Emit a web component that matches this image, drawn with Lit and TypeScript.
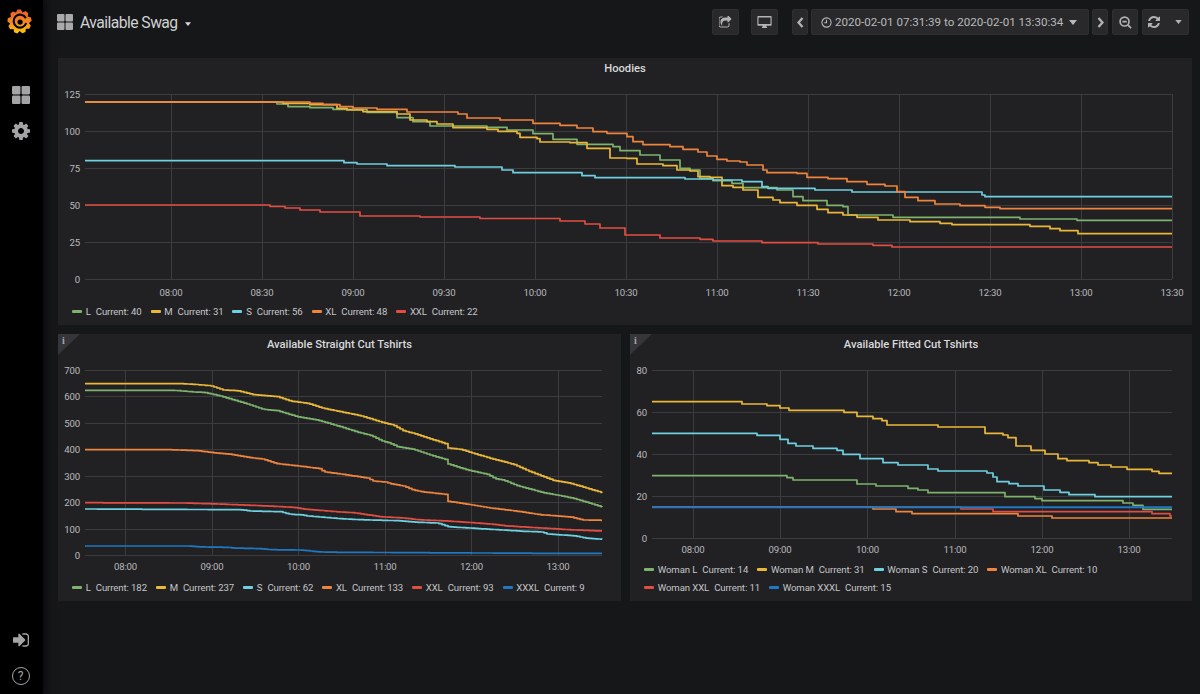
import { LitElement, html, css, svg } from "lit";
import { customElement, property } from "lit/decorators.js";

type Pt = [number, number];
interface Series { color: string; d: string; w?: number }
interface Chart {
  title: string;
  info: boolean;
  box: [number, number, number, number];
  x0: number;
  x1: number;
  labelY: number;
  gridTop: number;
  gridBottom: number;
  xTicks: [number, string][];
  yTicks: [number, string][];
  series: Series[];
  legend: { name: string; value: number; color: string }[];
}

const C = { L: "#7eb26d", M: "#eab839", S: "#6ed0e0", XL: "#ef843c", XXL: "#e24d42", XXXL: "#1f78c1" };

/* step-after line: every point says "at x the value jumps to y" */
function steps(pts: Pt[], end: number): string {
  let d = `M${pts[0][0]} ${pts[0][1]}`;
  for (let i = 1; i < pts.length; i++) d += `H${pts[i][0]}V${pts[i][1]}`;
  return d + `H${end}`;
}
/* many fine steps along straight knots */
function fine(pts: Pt[], period = 3): string {
  const out: Pt[] = [];
  let x = pts[0][0];
  const end = pts[pts.length - 1][0];
  let i = 0;
  while (x < end) {
    while (i < pts.length - 2 && pts[i + 1][0] <= x) i++;
    const [a, b] = pts[i];
    const [c, e] = pts[i + 1];
    out.push([x, +(b + ((e - b) * (x - a)) / (c - a)).toFixed(1)]);
    x += period;
  }
  out.push([end, pts[pts.length - 1][1]]);
  return steps(out, end);
}

const hoodies: Chart = {
  title: "Hoodies",
  info: false,
  box: [58, 80, 1134, 223],
  x0: 85,
  x1: 1172,
  labelY: 296,
  gridTop: 94,
  gridBottom: 279,
  xTicks: [[171, "08:00"], [262, "08:30"], [353, "09:00"], [444, "09:30"], [535, "10:00"], [626, "10:30"], [717, "11:00"], [808, "11:30"], [899, "12:00"], [990, "12:30"], [1081, "13:00"], [1172, "13:30"]],
  yTicks: [[94, "125"], [131, "100"], [168, "75"], [205, "50"], [242, "25"], [279, "0"]],
  series: [
    { color: C.L, d: steps([[85,102],[277,104],[288,106.7],[310,107.7],[333,109.3],[367,112.3],[397,117.7],[413,121.7],[430,126],[487,127.3],[507,130],[533,133.7],[553,139.3],[577,144.3],[613,146.7],[620,150.7],[640,155],[660,160],[680,168.3],[690,170],[700,178.3],[713,180.7],[732,183.3],[743,187.7],[777,190],[793,196.7],[803,200.7],[827,205.3],[843,206.7],[848,215],[893,217.3],[1020,219],[1077,220.3]], 1172) },
    { color: C.M, d: steps([[85,102],[283,103.3],[310,104.7],[337,108.3],[347,110],[363,111.7],[397,114],[410,120],[427,121.7],[437,124],[453,127.7],[487,129.3],[498,131.3],[517,133.3],[520,137.3],[537,138.7],[540,142],[570,142.7],[587,148.3],[610,158],[627,158.3],[637,164],[663,165.7],[677,170],[690,171],[698,176.7],[710,177.3],[722,185.7],[733,187.3],[743,190],[758,197.3],[773,200],[780,202.7],[797,205.3],[817,209.3],[828,212.7],[843,215],[857,217.3],[878,220],[910,221.7],[940,223.3],[952,224.7],[1030,226.3],[1050,228.7],[1060,230.7],[1078,233.7]], 1172) },
    { color: C.S, d: steps([[85,160.7],[344,162.7],[357,164],[387,165.7],[455,167],[502,170],[513,172.7],[582,175.7],[595,177.7],[685,179],[713,180],[742,181.7],[762,186.7],[768,188.3],[815,190],[852,192],[982,195],[985,196.7]], 1172) },
    { color: C.XL, d: steps([[85,102],[310,103.3],[323,104.7],[340,106.7],[353,108],[377,109.3],[407,112],[458,114],[467,118],[500,120],[533,123.3],[560,125.3],[577,128],[593,131.7],[607,133.3],[627,136.7],[633,141.7],[643,144.7],[670,146.7],[683,149.3],[698,152],[707,156],[717,159.3],[727,161],[740,162],[747,165],[763,170],[767,172.7],[797,173.3],[807,177.3],[828,178.7],[847,181.7],[867,184.3],[885,186],[897,191.7],[905,197.3],[918,200.7],[935,204],[960,205.7],[985,207.3],[1000,208.7]], 1172) },
    { color: C.XXL, d: steps([[85,205],[270,206.5],[285,208],[300,210],[320,212],[360,216],[420,217],[480,218.5],[560,221],[585,224],[600,228],[625,235],[660,238],[700,239.3],[713,241],[762,242.7],[818,244],[873,245.3],[892,247]], 1172) },
  ],
  legend: [
    { name: "L", value: 40, color: C.L },
    { name: "M", value: 31, color: C.M },
    { name: "S", value: 56, color: C.S },
    { name: "XL", value: 48, color: C.XL },
    { name: "XXL", value: 22, color: C.XXL },
  ],
};

const straight: Chart = {
  title: "Available Straight Cut Tshirts",
  info: true,
  box: [58, 356, 563, 223],
  x0: 85,
  x1: 602,
  labelY: 570,
  gridTop: 370,
  gridBottom: 555.5,
  xTicks: [[125.5, "08:00"], [212, "09:00"], [298.5, "10:00"], [385, "11:00"], [471.5, "12:00"], [558, "13:00"]],
  yTicks: [[370, "700"], [396.5, "600"], [423, "500"], [449.5, "400"], [476, "300"], [502.5, "200"], [529, "100"], [555.5, "0"]],
  series: [
    { color: C.L, d: fine([[85,390.3],[173,390.3],[193,392],[203,392.3],[220,396],[247,404],[263,409.3],[277,410.7],[297,416.7],[317,420],[340,426.7],[357,432],[370,435.3],[382,441],[390,443.3],[397,446.7],[413,449.3],[430,455],[447,460],[448,464],[467,470],[487,474.3],[495,478.7],[503,480],[517,485.7],[543,492.7],[560,495.7],[573,498.3],[602,507]]) },
    { color: C.M, d: fine([[85,383.7],[180,383.7],[193,384.3],[210,385.7],[223,390],[237,390.7],[253,394.7],[277,396.7],[290,401],[307,403.3],[323,408.3],[340,411.7],[360,415.7],[383,422.7],[393,425],[403,430.7],[413,433.3],[447,444.3],[448,448],[460,449.3],[473,453.3],[490,458.3],[513,464.3],[530,471.7],[553,480.3],[570,483.3],[602,492.7]]) },
    { color: C.S, d: fine([[85,509],[240,509.7],[250,511],[280,511.7],[290,514.3],[303,515],[307,516],[340,518.7],[360,519.7],[397,520.7],[417,522.3],[437,523],[448,526.7],[473,528.3],[497,529.7],[523,531.3],[542,532],[547,534],[573,535.7],[587,538.3],[602,539.3]]) },
    { color: C.XL, d: fine([[85,449.7],[170,449.7],[197,450.7],[213,452.7],[230,454.3],[250,457.7],[262,459],[277,463.7],[298,466],[320,468.7],[323,471.7],[340,474],[367,478],[373,481],[385,482],[390,483.7],[403,486],[413,490],[423,492],[445,494.3],[448,501.3],[470,504.7],[490,508],[513,510.7],[540,514.7],[570,517],[583,520],[602,520.3]]) },
    { color: C.XXL, d: fine([[85,502.7],[183,503],[217,504],[260,505.7],[293,507.3],[303,509],[340,512],[353,512.7],[380,516.7],[403,518],[417,519.7],[447,521],[490,524],[507,526],[553,528.7],[573,530],[602,531]]) },
    { color: C.XXXL, d: fine([[85,546],[187,546],[203,547],[227,547.3],[233,548],[260,548.7],[270,549.7],[300,550],[320,552],[340,552.3],[540,553.3],[602,553.3]]) },
  ],
  legend: [
    { name: "L", value: 182, color: C.L },
    { name: "M", value: 237, color: C.M },
    { name: "S", value: 62, color: C.S },
    { name: "XL", value: 133, color: C.XL },
    { name: "XXL", value: 93, color: C.XXL },
    { name: "XXXL", value: 9, color: C.XXXL },
  ],
};

const fitted: Chart = {
  title: "Available Fitted Cut Tshirts",
  info: true,
  box: [630, 356, 562, 205],
  x0: 652,
  x1: 1172,
  labelY: 553,
  gridTop: 370,
  gridBottom: 538,
  xTicks: [[693, "08:00"], [780, "09:00"], [867.5, "10:00"], [955, "11:00"], [1042, "12:00"], [1129, "13:00"]],
  yTicks: [[370, "80"], [412, "60"], [454, "40"], [496, "20"], [538, "0"]],
  series: [
    { color: C.L, d: steps([[652,475.7],[787,477.7],[793,480],[857,484],[876,486],[908,488.3],[918,490],[928,492.7],[1005,496.7],[1035,498.7],[1042,500.7],[1123,503],[1133,505.3],[1143,509.3]], 1172) },
    { color: C.M, d: steps([[652,401.7],[742,404],[767,405.7],[780,408],[789,410.3],[844,412.3],[857,416.3],[873,418.7],[882,420.7],[887,425],[938,427],[985,433.3],[1003,435],[1008,437.7],[1016,446],[1031,450.3],[1045,454],[1058,458.7],[1067,460.7],[1089,462.7],[1098,465],[1111,467],[1127,469.3],[1152,471.3],[1159,473.3]], 1172) },
    { color: C.S, d: steps([[652,433.3],[757,435.3],[780,439.3],[788,443.3],[796,446],[813,448.3],[837,450.3],[843,454.3],[860,458.7],[883,462.7],[898,465],[928,469],[938,471],[987,473],[993,477],[997,481.7],[1009,483.7],[1018,486],[1044,490],[1060,492.3],[1069,494.7],[1095,496.7]], 1172) },
    { color: C.XL, d: steps([[652,507],[873,509],[896,511.7],[912,513.7],[1018,516],[1052,518]], 1172) },
    { color: C.XXL, d: steps([[652,507],[961,509],[993,511.7],[1152,513.7],[1170,516]], 1172) },
    { color: C.XXXL, d: steps([[652,507.3]], 1172), w: 2 },
  ],
  legend: [
    { name: "Woman L", value: 14, color: C.L },
    { name: "Woman M", value: 31, color: C.M },
    { name: "Woman S", value: 20, color: C.S },
    { name: "Woman XL", value: 10, color: C.XL },
    { name: "Woman XXL", value: 11, color: C.XXL },
    { name: "Woman XXXL", value: 15, color: C.XXXL },
  ],
};

@customElement("chart-panel")
class ChartPanel extends LitElement {
  @property({ attribute: false }) config!: Chart;

  static styles = css`
    :host { display: flex; flex-direction: column; position: relative; height: 267px; background: #212124; min-width: 0; }
    .title { height: 22px; line-height: 22px; text-align: center; font-size: 11.2px; font-weight: 500; color: #d8d9da; }
    svg { display: block; flex: none; }
    .grid { stroke: #3c3c3f; stroke-width: 1; shape-rendering: crispEdges; }
    .tick { font-size: 9.6px; letter-spacing: -0.18px; fill: #b9b9bb; }
    .line { fill: none; stroke-width: 1.7; stroke-linejoin: round; }
    .legend { display: flex; flex-wrap: wrap; column-gap: 9px; row-gap: 2px; padding: 0 13px 6px 14px; }
    .item { display: flex; align-items: center; height: 16px; font-size: 9.6px; letter-spacing: -0.1px; color: #c4c5c7; white-space: nowrap; }
    .swatch { width: 10px; height: 3px; border-radius: 1px; margin-right: 3.7px; }
    .name { margin-right: 5px; }
    .info { position: absolute; left: 0; top: 0; width: 22px; height: 21px; background: #35353a; clip-path: polygon(0 0, 100% 0, 0 100%); }
    .info span { position: absolute; left: 4px; top: 1px; font: 700 10px/12px "Liberation Serif", serif; color: #a5a5a8; }
  `;

  render() {
    const c = this.config;
    const [bx, by, bw, bh] = c.box;
    return html`
      ${c.info ? html`<div class="info"><span>i</span></div>` : ""}
      <div class="title">${c.title}</div>
      <svg width=${bw} height=${bh} viewBox="${bx} ${by} ${bw} ${bh}">
        ${c.yTicks.map(([y]) => svg`<line class="grid" x1=${c.x0} x2=${c.x1} y1=${y} y2=${y}></line>`)}
        ${c.xTicks.map(([x]) => svg`<line class="grid" x1=${x} x2=${x} y1=${c.gridTop} y2=${c.gridBottom}></line>`)}
        ${c.yTicks.map(([y, t]) => svg`<text class="tick" x=${c.x0 - 5} y=${y + 3.5} text-anchor="end">${t}</text>`)}
        ${c.xTicks.map(([x, t]) => svg`<text class="tick" x=${x} y=${c.labelY} text-anchor="middle">${t}</text>`)}
        ${c.series.map((s) => svg`<path class="line" d=${s.d} stroke=${s.color} style=${s.w ? `stroke-width:${s.w}` : ""}></path>`)}
      </svg>
      <div class="legend">
        ${c.legend.map((l) => html`<div class="item"><span class="swatch" style="background:${l.color}"></span><span class="name">${l.name}</span><span>Current: ${l.value}</span></div>`)}
      </div>
    `;
  }
}

const ICON = {
  refresh: "M1639 1056q0 5-1 7-64 268-268 434.5t-478 166.5q-146 0-282.5-55t-243.5-157l-129 129q-19 19-45 19t-45-19-19-45v-448q0-26 19-45t45-19h448q26 0 45 19t19 45-19 45l-137 137q71 66 161 102t187 36q134 0 250-65t186-179q11-17 53-117 8-23 30-23h192q13 0 22.5 9.5t9.5 22.5zm25-800v448q0 26-19 45t-45 19h-448q-26 0-45-19t-19-45 19-45l138-138q-148-137-349-137-134 0-250 65t-186 179q-11 17-53 117-8 23-30 23h-199q-13 0-22.5-9.5t-9.5-22.5v-7q65-268 270-434.5t480-166.5q146 0 284 55.5t245 156.5l130-129q19-19 45-19t45 19 19 45z",
  signin: "M1312 896q0 26-19 45l-544 544q-19 19-45 19t-45-19-19-45v-288h-448q-26 0-45-19t-19-45v-384q0-26 19-45t45-19h448v-288q0-26 19-45t45-19 45 19l544 544q19 19 19 45zm352-352v704q0 119-84.5 203.5t-203.5 84.5h-320q-13 0-22.5-9.5t-9.5-22.5q0-4-1-20t-.5-26.5 3-23.5 10-19.5 20.5-6.5h320q66 0 113-47t47-113v-704q0-66-47-113t-113-47h-312l-11.5-1-11.5-3-8-5.5-7-9-2-13.5q0-4-1-20t-.5-26.5 3-23.5 10-19.5 20.5-6.5h320q119 0 203.5 84.5t84.5 203.5z",
  cog: "M1152 896q0-106-75-181t-181-75-181 75-75 181 75 181 181 75 181-75 75-181zm512-109v222q0 12-8 23t-20 13l-185 28q-19 54-39 91 35 50 107 138 10 12 10 25t-9 23q-27 37-99 108t-94 71q-12 0-26-9l-138-108q-44 23-91 38-16 136-29 186-7 28-36 28h-222q-14 0-24.5-8.5t-11.5-21.5l-28-184q-49-16-90-37l-141 107q-10 9-25 9-14 0-25-11-126-114-165-168-7-10-7-23 0-12 8-23 15-21 51-66.5t54-70.5q-27-50-41-99l-183-27q-13-2-21-12.5t-8-23.5v-222q0-12 8-23t19-13l186-28q14-46 39-92-40-57-107-138-10-12-10-24 0-10 9-23 26-36 98.5-107.5t94.5-71.5q13 0 26 10l138 107q44-23 91-38 16-136 29-186 7-28 36-28h222q14 0 24.5 8.5t11.5 21.5l28 184q49 16 90 37l142-107q9-9 24-9 13 0 25 10 129 119 165 170 7 8 7 22 0 12-8 23-15 21-51 66.5t-54 70.5q26 50 41 98l183 28q13 2 21 12.5t8 23.5z",
  share: "M1472 989v259q0 119-84.5 203.5t-203.5 84.5h-832q-119 0-203.5-84.5t-84.5-203.5v-832q0-119 84.5-203.5t203.5-84.5h255q13 0 22.5 9.5t9.5 22.5q0 27-26 32-77 26-133 60-10 4-16 4h-112q-66 0-113 47t-47 113v832q0 66 47 113t113 47h832q66 0 113-47t47-113v-214q0-19 18-29 28-13 54-37 16-16 35-8 21 9 21 29zm237-496l-384 384q-18 19-45 19-12 0-25-5-39-17-39-59v-192h-160q-323 0-438 131-119 137-74 473 3 23-20 34-8 2-12 2-16 0-26-13-10-14-21-31t-39.5-68.5-49.5-99.5-38.5-114-17.5-122q0-49 3.5-91t14-90 28-88 47-81.5 68.5-74 94.5-61.5 124.5-48.5 159.5-30.5 196.5-11h160v-192q0-42 39-59 13-5 25-5 26 0 45 19l384 384q19 19 19 45t-19 45z",
};

/* gear outline of the logo */
function logoGear(cx: number, cy: number, r1: number, r2: number, n: number): string {
  const pts: string[] = [];
  for (let i = 0; i < n; i++) {
    const a = (i / n) * Math.PI * 2 - 0.2;
    const w = (Math.PI * 2) / n;
    [[-0.5, r1], [-0.2, r2], [0.2, r2], [0.5, r1]].forEach(([o, r]) => {
      pts.push(`${(cx + Math.cos(a + o * w) * r).toFixed(2)},${(cy + Math.sin(a + o * w) * r).toFixed(2)}`);
    });
  }
  return pts.join(" ");
}

const grid4 = (cls: string) => html`<svg class=${cls} viewBox="0 0 16 16"><rect x="0" y="0" width="7.5" height="7.5" rx="1"></rect><rect x="8.5" y="0" width="7.5" height="7.5" rx="1"></rect><rect x="0" y="8.5" width="7.5" height="7.5" rx="1"></rect><rect x="8.5" y="8.5" width="7.5" height="7.5" rx="1"></rect></svg>`;
const caret = html`<svg class="caret" viewBox="0 0 8 5"><polygon points="0,0 8,0 4,5"></polygon></svg>`;

@customElement("app-root")
class AppRoot extends LitElement {
  static styles = css`
    :host { display: flex; width: 1200px; height: 694px; overflow: hidden; background: #161719; font-family: Roboto, "Liberation Sans", sans-serif; color: #d8d9da; }
    .side { flex: none; width: 43px; box-sizing: border-box; padding-right: 2px; background: #000; display: flex; flex-direction: column; align-items: center; position: relative; box-shadow: 0 0 9px 2px rgba(0,0,0,.75); }
    .logo { height: 42px; display: flex; align-items: center; justify-content: center; margin-bottom: 35px; margin-right: 2px; }
    .logo svg { width: 25px; height: 25px; }
    .sitem { height: 36px; width: 41px; display: flex; align-items: center; justify-content: center; }
    .sitem.gear { height: 35px; }
    .push { margin-top: auto; }
    .side svg { fill: #a4a4a6; }
    .sgrid { width: 18px; height: 18px; }
    .sgear { width: 18px; height: 18px; }
    .ssign { width: 16px; height: 16px; }
    .help { width: 18px; height: 18px; border: 1.3px solid #a4a4a6; border-radius: 50%; box-sizing: border-box; text-align: center; font-size: 12px; line-height: 16px; color: #a4a4a6; }
    .main { flex: 1; min-width: 0; padding: 9px 8px 0 15px; display: flex; flex-direction: column; }
    .nav { height: 26px; display: flex; align-items: center; margin-bottom: 23px; margin-right: 3px; }
    .hgrid { width: 16px; height: 16px; fill: #a9a9ab; margin-left: -1px; margin-right: 7px; }
    .htitle { font-size: 15.7px; letter-spacing: -0.55px; color: #d0d1d3; }
    .caret { width: 6px; height: 4px; fill: currentColor; display: block; }
    .hcaret { margin-left: 7px; margin-top: 4px; color: #d8d9da; }
    .btns { margin-left: auto; display: flex; align-items: stretch; height: 26px; }
    .btn { display: flex; align-items: center; justify-content: center; box-sizing: border-box; background: #29292b; border: 1px solid #2f2f32; border-radius: 2px; color: #b3b3b5; }
    .btn svg { fill: currentColor; }
    .share { width: 27px; margin-right: 12px; }
    .share svg { width: 13px; height: 13px; }
    .monitor { width: 27px; margin-right: 14px; }
    .monitor svg { width: 15px; height: 14px; }
    .arrow { width: 16px; }
    .arrow svg { width: 7px; height: 11px; fill: none; stroke: currentColor; stroke-width: 2.3; }
    .time { width: 278px; margin: 0 3px; justify-content: flex-start; padding-left: 9px; font-size: 11.6px; color: #b9b9bb; white-space: nowrap; }
    .time .clock { width: 11px; height: 11px; margin-right: 3px; flex: none; fill: none; stroke: currentColor; stroke-width: 1.2; }
    .time .caret { margin-left: 6px; width: 8px; height: 5px; }
    .zoom { width: 26px; margin: 0 4px; }
    .zoom svg { width: 13px; height: 13px; fill: none; stroke: currentColor; stroke-width: 1.8; }
    .refresh { width: 47px; justify-content: flex-start; padding-left: 5px; }
    .refresh svg { width: 12px; height: 12px; }
    .refresh .caret { width: 7px; height: 4px; margin-left: 15px; }
    .grid { display: grid; grid-template-columns: 563px 562px; grid-template-rows: 267px 267px; gap: 9px; }
    .wide { grid-column: 1 / 3; }
  `;

  render() {
    return html`
      <aside class="side">
        <div class="logo">
          <svg viewBox="0 0 26 26">
            <defs><linearGradient id="lg" x1="0" y1="0" x2="0" y2="1"><stop offset="0" stop-color="#ee5a2a"></stop><stop offset=".55" stop-color="#f58a1f"></stop><stop offset="1" stop-color="#fbca0a"></stop></linearGradient></defs>
            <polygon points=${logoGear(13, 13, 10, 12.6, 9)} fill="url(#lg)"></polygon>
            <path d="M19.6 9.6A6.7 6.7 0 1 0 20 14.6" fill="none" stroke="#000" stroke-width="2.2"></path>
            <circle cx="13.6" cy="13.6" r="2.7" fill="#000"></circle>
          </svg>
        </div>
        <div class="sitem">${grid4("sgrid")}</div>
        <div class="sitem gear"><svg class="sgear" viewBox="128 128 1536 1536"><path d=${ICON.cog}></path></svg></div>
        <div class="sitem push"><svg class="ssign" viewBox="128 128 1536 1536"><path d=${ICON.signin}></path></svg></div>
        <div class="sitem"><div class="help">?</div></div>
      </aside>
      <main class="main">
        <header class="nav">
          ${grid4("hgrid")}
          <span class="htitle">Available Swag</span>
          <span class="hcaret">${caret}</span>
          <div class="btns">
            <div class="btn share"><svg viewBox="128 128 1664 1536"><path d=${ICON.share}></path></svg></div>
            <div class="btn monitor"><svg viewBox="0 0 20 18"><path fill-rule="evenodd" d="M1.5 1h17a1 1 0 0 1 1 1v11a1 1 0 0 1-1 1h-6c0 1.3.8 2 1 2.5v.5h-7v-.5c.2-.5 1-1.2 1-2.5h-6a1 1 0 0 1-1-1V2a1 1 0 0 1 1-1zM2 3v8.5h16V3z"></path></svg></div>
            <div class="btn arrow"><svg viewBox="0 0 7 11"><path d="M5.5 1L1.5 5.5L5.5 10"></path></svg></div>
            <div class="btn time">
              <svg class="clock" viewBox="0 0 12 12"><circle cx="6" cy="6" r="5"></circle><path d="M6 3v3.2h-2.4"></path></svg>
              <span>2020-02-01 07:31:39 to 2020-02-01 13:30:34</span>
              ${caret}
            </div>
            <div class="btn arrow"><svg viewBox="0 0 7 11"><path d="M1.5 1L5.5 5.5L1.5 10"></path></svg></div>
            <div class="btn zoom"><svg viewBox="0 0 14 14"><circle cx="6" cy="6" r="4.8"></circle><path d="M9.5 9.5L13 13M3.6 6h4.8"></path></svg></div>
            <div class="btn refresh"><svg viewBox="128 128 1536 1536"><path d=${ICON.refresh}></path></svg>${caret}</div>
          </div>
        </header>
        <section class="grid">
          <chart-panel class="wide" .config=${hoodies}></chart-panel>
          <chart-panel .config=${straight}></chart-panel>
          <chart-panel .config=${fitted}></chart-panel>
        </section>
      </main>
    `;
  }
}
